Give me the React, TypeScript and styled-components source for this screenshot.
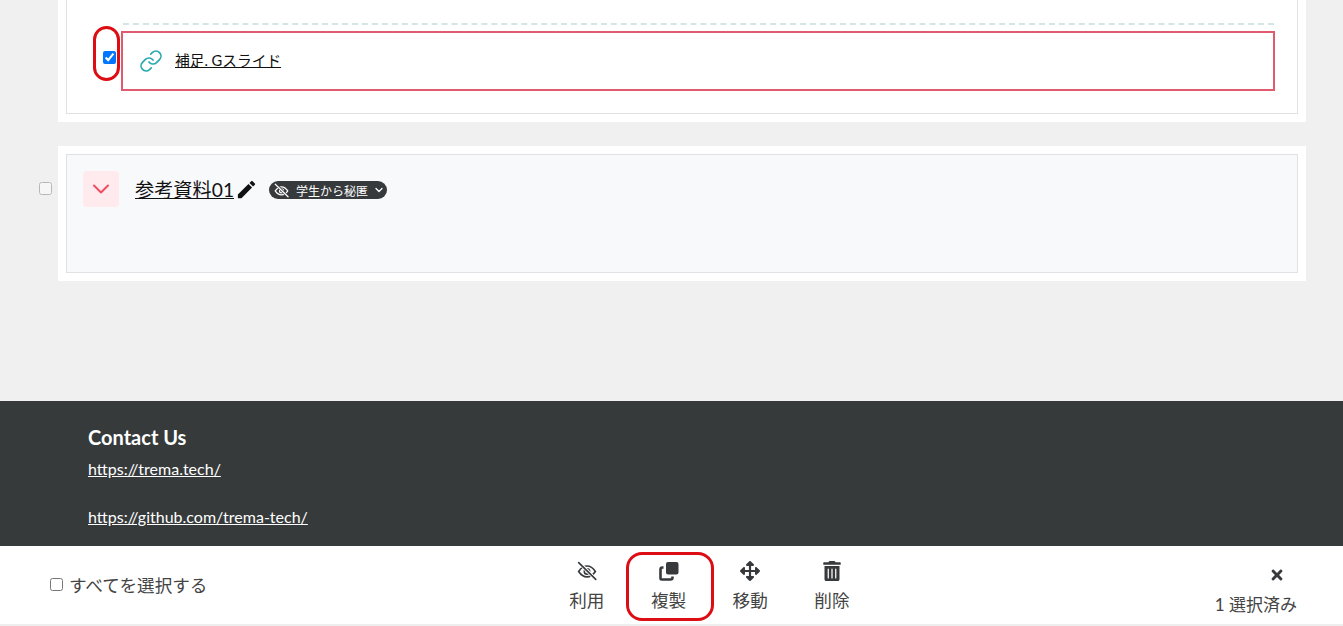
import React from 'react';
import styled, { createGlobalStyle } from 'styled-components';
import { FaArrowsAlt, FaTimes, FaTrashAlt } from 'react-icons/fa';
import { MdEdit } from 'react-icons/md';
import { LuChevronDown, LuLink } from 'react-icons/lu';

const GlobalStyle = createGlobalStyle`
  html, body {
    margin: 0;
    height: 626px;
    overflow: hidden;
    background: #f0f0f0;
    font-family: Lato, "Noto Sans CJK JP", sans-serif;
    color: #373a3c;
  }
`;

const Main = styled.main`
  display: flex;
  flex-direction: column;
  gap: 24px;
  height: 401px;
  padding: 0 37px 0 58px;
  box-sizing: border-box;
`;

const Card = styled.section`
  background: #fff;
  padding: 8px;
`;

const TopCard = styled(Card)`
  padding-top: 0;
`;

const TopPanel = styled.div`
  height: 114px;
  box-sizing: border-box;
  border: 1px solid #e2e2e2;
  border-top: 0;
  padding: 23px 22px 0 36px;
  background: #fff;
`;

const Dashed = styled.div`
  margin-left: 20px;
  margin-right: 1px;
  border-top: 2px dashed #d5e5e3;
`;

const ItemRow = styled.div`
  display: flex;
  align-items: center;
  gap: 5px;
  margin-top: 6px;
  position: relative;
`;

const Check = styled.input.attrs({ type: 'checkbox' })`
  width: 13px;
  height: 13px;
  margin: 0;
  flex: none;
`;

const ItemCheck = styled(Check)`
  margin-top: -8px;
`;

const FadedCheck = styled(Check)`
  opacity: 0.45;
`;

const CheckRing = styled.span`
  position: absolute;
  left: -10px;
  top: -5px;
  width: 27px;
  height: 55px;
  box-sizing: border-box;
  border: 3px solid #dd0d14;
  border-radius: 14px;
  pointer-events: none;
`;

const ItemBox = styled.div`
  flex: 1;
  height: 60px;
  box-sizing: border-box;
  border: 2px solid #e05a70;
  display: flex;
  align-items: center;
  gap: 12px;
  padding-left: 16px;
`;

const ItemLink = styled.a`
  font-size: 14.7px;
  color: #111;
  text-decoration: underline;
  margin-bottom: 3px;
`;

const SecondRow = styled.div`
  position: relative;
`;

const OuterCheck = styled.div`
  position: absolute;
  left: -19px;
  top: 36px;
  display: flex;
`;

const SecondCard = styled(Card)`
  height: 135px;
  box-sizing: border-box;
`;

const Panel = styled.div`
  height: 119px;
  box-sizing: border-box;
  border: 1px solid #dfe1e4;
  background: #f8f9fb;
  padding: 16px;
  display: flex;
  align-items: flex-start;
  gap: 16px;
`;

const Toggle = styled.button`
  width: 36px;
  height: 36px;
  border: 0;
  padding: 0;
  border-radius: 4px;
  background: #ffebee;
  color: #ef4b63;
  display: flex;
  align-items: center;
  justify-content: center;
`;

const TitleLine = styled.div`
  display: flex;
  align-items: center;
  height: 36px;
`;

const Title = styled.a`
  font-size: 19.2px;
  color: #111;
  text-decoration: underline;
  margin-top: -1px;
`;

const Pencil = styled(MdEdit)`
  font-size: 23px;
  color: #111;
  margin: 0 11px 0 1px;
`;

const Badge = styled.span`
  display: inline-flex;
  align-items: center;
  height: 18px;
  width: 118px;
  box-sizing: border-box;
  border-radius: 9px;
  padding: 0 5px;
  background: #373a3c;
  color: #fff;
  font-size: 12px;
  white-space: nowrap;
  margin-top: 2px;
`;

const BadgeEye = styled.span`
  display: flex;
  margin-right: 7px;
`;

const BadgeChevron = styled(LuChevronDown)`
  margin-left: 5px;
  flex: none;
`;

const Footer = styled.footer`
  height: 145px;
  box-sizing: border-box;
  background: #363a3b;
  color: #fff;
  padding: 23px 0 0 88px;
`;

const FooterTitle = styled.h2`
  font-size: 20px;
  line-height: 26px;
  font-weight: 700;
  margin: 0 0 7px;
`;

const FooterLink = styled.a`
  display: block;
  font-size: 16px;
  line-height: 24px;
  margin-bottom: 24px;
  color: #fff;
  text-decoration: underline;
`;

const ActionBar = styled.div`
  height: 80px;
  box-sizing: border-box;
  background: #fff;
  border-top: 1px solid #fff;
  border-bottom: 2px solid #eee;
  display: grid;
  grid-template-columns: 496px auto 1fr;
  align-items: center;
  padding: 0 46px 0 50px;
  color: #444;
`;

const SelectAll = styled.label`
  display: flex;
  align-items: center;
  gap: 6px;
  font-size: 17.6px;
  margin-top: -2px;
`;

const Actions = styled.div`
  display: flex;
`;

const Action = styled.button`
  position: relative;
  width: 81.7px;
  height: 68px;
  border: 0;
  padding: 2px 0 0;
  background: none;
  color: inherit;
  font-family: inherit;
  font-size: 17.6px;
  display: flex;
  flex-direction: column;
  align-items: center;
  justify-content: center;
  gap: 6px;
  svg {
    height: 20px;
    width: auto;
    color: #373a3c;
  }
`;

const ActionRing = styled.span`
  position: absolute;
  inset: 0 -5px -1px -2px;
  border: 3px solid #dd0d14;
  border-radius: 16px;
`;

const Selected = styled.div`
  justify-self: end;
  display: flex;
  flex-direction: column;
  align-items: flex-end;
  gap: 8px;
  padding-top: 11px;
  font-size: 17px;
`;

const CloseIcon = styled(FaTimes)`
  font-size: 16px;
  color: #373a3c;
  margin-right: 12px;
`;

function EyeOff({ size = 22, gap = '#fff' }: { size?: number; gap?: string }) {
  return (
    <svg width={size} height={size} viewBox="0 0 24 24" fill="none" stroke="currentColor" strokeWidth="2" strokeLinecap="round">
      <path d="M2 12.5C5 8 8.5 6 12 6s7 2 10 6.5C19 17 15.5 19 12 19s-7-2-10-6.5Z" />
      <circle cx="12" cy="12.5" r="3.2" />
      <path d="M3 2.5 22 21.5" stroke={gap} strokeWidth="4.2" />
      <path d="M2 2 22.5 22" />
    </svg>
  );
}

function CopyIcon() {
  return (
    <svg viewBox="2 2 20 20" fill="none" stroke="currentColor">
      <rect x="9" y="3" width="12.5" height="12.5" rx="2" fill="currentColor" stroke="none" />
      <path d="M6.5 8.5H5.5a2 2 0 0 0-2 2v9a1 1 0 0 0 1 1h9a2 2 0 0 0 2-2v-1" strokeWidth="2.6" />
    </svg>
  );
}

export default function App() {
  return (
    <>
      <GlobalStyle />
      <Main>
        <TopCard>
          <TopPanel>
            <Dashed />
            <ItemRow>
              <ItemCheck defaultChecked />
              <CheckRing />
              <ItemBox>
                <LuLink size={24} color="#2aa9ae" strokeWidth={1.7} />
                <ItemLink>補足. Gスライド</ItemLink>
              </ItemBox>
            </ItemRow>
          </TopPanel>
        </TopCard>
        <SecondRow>
          <OuterCheck>
            <FadedCheck />
          </OuterCheck>
          <SecondCard>
            <Panel>
              <Toggle>
                <LuChevronDown size={28} strokeWidth={1.7} />
              </Toggle>
              <TitleLine>
                <Title>参考資料01</Title>
                <Pencil />
                <Badge>
                  <BadgeEye>
                    <EyeOff size={15} gap="#373a3c" />
                  </BadgeEye>
                  学生から秘匿
                  <BadgeChevron size={12} strokeWidth={2.6} />
                </Badge>
              </TitleLine>
            </Panel>
          </SecondCard>
        </SecondRow>
      </Main>
      <Footer>
        <FooterTitle>Contact Us</FooterTitle>
        <FooterLink>https://trema.tech/</FooterLink>
        <FooterLink>https://github.com/trema-tech/</FooterLink>
      </Footer>
      <ActionBar>
        <SelectAll>
          <Check />
          すべてを選択する
        </SelectAll>
        <Actions>
          <Action>
            <EyeOff />
            利用
          </Action>
          <Action>
            <ActionRing />
            <CopyIcon />
            複製
          </Action>
          <Action>
            <FaArrowsAlt />
            移動
          </Action>
          <Action>
            <FaTrashAlt />
            削除
          </Action>
        </Actions>
        <Selected>
          <CloseIcon />1 選択済み
        </Selected>
      </ActionBar>
    </>
  );
}
